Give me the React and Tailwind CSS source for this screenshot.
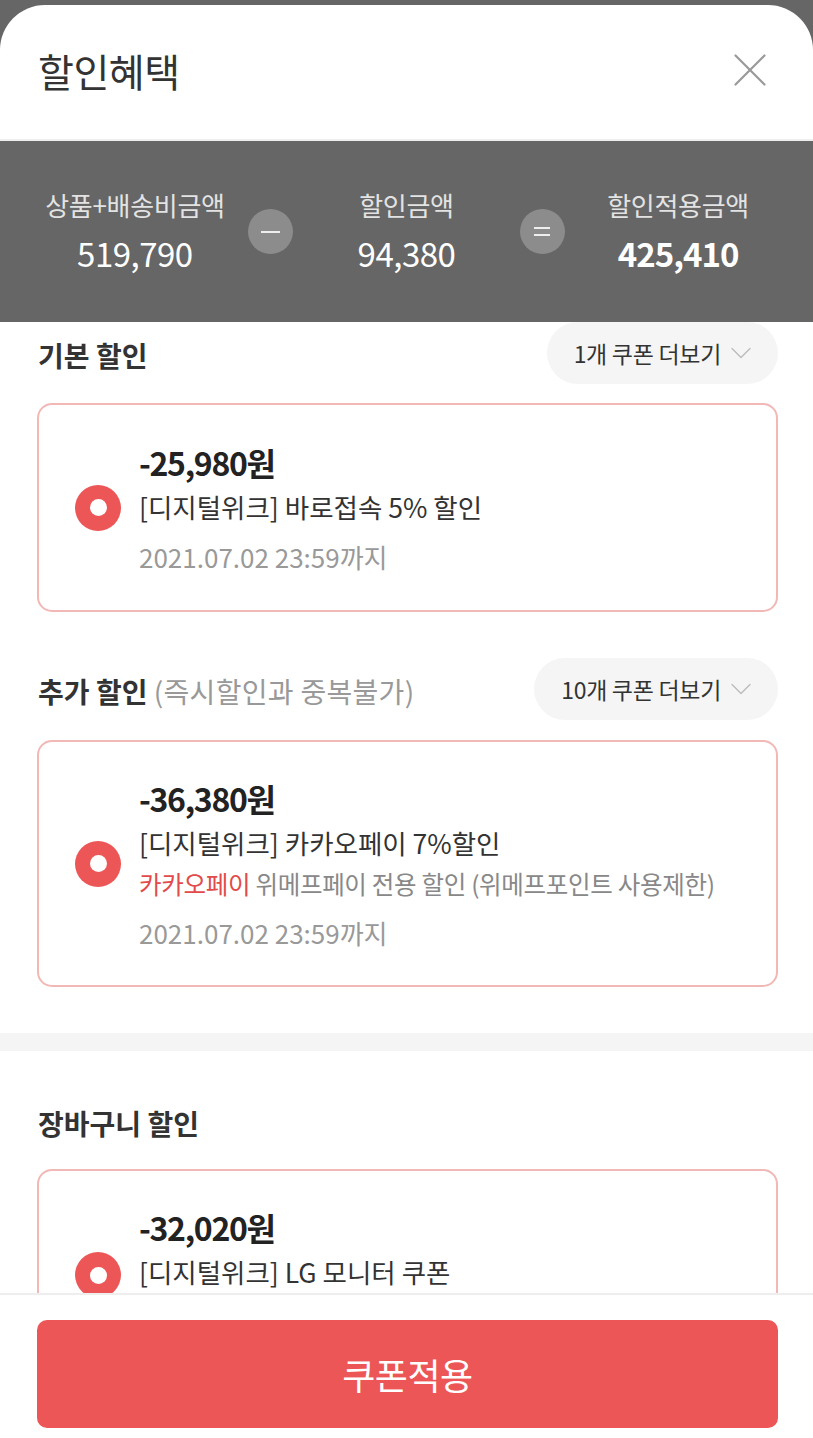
import { X, ChevronDown } from 'lucide-react';

const FONT = { fontFamily: '"Noto Sans CJK KR", "Noto Sans", sans-serif' };

const Radio = () => (
    <span className="w-[46px] h-[46px] rounded-full bg-[#ec5656] flex items-center justify-center shrink-0">
        <span className="w-[17px] h-[17px] rounded-full bg-white" />
    </span>
);

const MoreButton = ({ label }) => (
    <button className="h-[62px] pl-[27px] pr-[19px] rounded-full bg-[#f5f5f5] flex items-center gap-[2px] text-[23px] text-[#333] tracking-[-0.3px]">
        {label}
        <ChevronDown size={36} strokeWidth={0.9} className="text-[#bbb]" />
    </button>
);

const CouponCard = ({ amount, title, extra, date, className }) => (
    <div className={`ml-[37px] mr-[35px] border-2 border-[#f2b8b5] rounded-[15px] flex items-center pl-[36px] pr-6 ${className ?? ''}`}>
        <Radio />
        <div className="ml-[18px] mt-[9px] flex flex-col">
            <p className="text-[32px] font-bold text-[#222] leading-[44px] tracking-[-1.3px]">{amount}</p>
            <p className="text-[26.5px] text-[#333] leading-[46px]">{title}</p>
            {extra && (
                <p className="text-[24.5px] text-[#888] leading-[36px] tracking-[-0.3px]">
                    <span className="text-[#e34a4a]">{extra.brand}</span> {extra.text}
                </p>
            )}
            <p className={`text-[26px] text-[#999] leading-[54px] ${extra ? 'mt-[4px]' : ''}`}>{date}</p>
        </div>
    </div>
);

const Summary = ({ label, value, strong }) => (
    <div className="flex flex-col items-center whitespace-nowrap">
        <span className="text-[26px] text-[#e3e3e3] leading-[34px] tracking-[-0.3px]">{label}</span>
        <span className={strong
            ? 'text-[33px] font-bold text-white leading-[62px] tracking-[-1px]'
            : 'text-[33px] text-white leading-[62px] tracking-[-0.5px]'}>{value}</span>
    </div>
);

export default function App() {
    return (
        <div className="h-[1438px] bg-[#666] pt-[5px] overflow-hidden" style={FONT}>
            <div className="h-full bg-white rounded-t-[45px] flex flex-col overflow-hidden">
                {/* 헤더 */}
                <div className="h-[136px] shrink-0 flex items-center justify-between pl-[38px] pr-[34px] border-b-2 border-[#eee]">
                    <h1 className="text-[39px] text-[#333] tracking-[-0.5px] -mt-[4px]">할인혜택</h1>
                    <X size={58} strokeWidth={0.9} className="text-[#999] -mt-[4px]" />
                </div>

                {/* 금액 요약 */}
                <div className="h-[181px] shrink-0 bg-[#666] grid grid-cols-5 justify-items-center items-start px-[67px] pt-[47px]">
                    <Summary label="상품+배송비금액" value="519,790" />
                    <span className="mt-[21px] w-[45px] h-[45px] rounded-full bg-[#8c8c8c] flex items-center justify-center">
                        <span className="w-[19px] h-[2px] bg-[#eee]" />
                    </span>
                    <Summary label="할인금액" value="94,380" />
                    <span className="mt-[21px] w-[45px] h-[45px] rounded-full bg-[#8c8c8c] flex flex-col gap-[5px] items-center justify-center">
                        <span className="w-[16px] h-[2px] bg-[#eee]" />
                        <span className="w-[16px] h-[2px] bg-[#eee]" />
                    </span>
                    <Summary label="할인적용금액" value="425,410" strong />
                </div>

                {/* 쿠폰 목록 */}
                <div className="flex-1 overflow-hidden">
                    <div className="flex items-center justify-between pl-[38px] pr-[35px]">
                        <h2 className="text-[28px] font-bold text-[#333] mt-[4px]">기본 할인</h2>
                        <MoreButton label="1개 쿠폰 더보기" />
                    </div>
                    <CouponCard
                        className="mt-[19px] h-[209px]"
                        amount="-25,980원"
                        title="[디지털위크] 바로접속 5% 할인"
                        date="2021.07.02 23:59까지"
                    />

                    <div className="mt-[46px] flex items-center justify-between pl-[38px] pr-[35px]">
                        <h2 className="text-[28px] font-bold text-[#333] mt-[4px]">
                            추가 할인 <span className="font-normal text-[#999] tracking-[0.3px]">(즉시할인과 중복불가)</span>
                        </h2>
                        <MoreButton label="10개 쿠폰 더보기" />
                    </div>
                    <CouponCard
                        className="mt-[20px] h-[247px]"
                        amount="-36,380원"
                        title="[디지털위크] 카카오페이 7%할인"
                        extra={{ brand: '카카오페이', text: '위메프페이 전용 할인 (위메프포인트 사용제한)' }}
                        date="2021.07.02 23:59까지"
                    />

                    <div className="mt-[46px] h-[18px] bg-[#f5f5f5]" />

                    <h2 className="mt-[52px] pl-[38px] text-[28px] font-bold text-[#333] leading-[40px]">장바구니 할인</h2>
                    <div className="mt-[26px] ml-[37px] mr-[35px] border-2 border-[#f2b8b5] rounded-[15px] h-[220px] pl-[36px] pt-[34px]">
                        <div className="flex items-start">
                            <span className="mt-[47px]"><Radio /></span>
                            <div className="ml-[18px] flex flex-col">
                                <p className="text-[32px] font-bold text-[#222] leading-[44px] tracking-[-1.3px]">-32,020원</p>
                                <p className="text-[26.5px] text-[#333] leading-[46px]">[디지털위크] LG 모니터 쿠폰</p>
                            </div>
                        </div>
                    </div>
                </div>

                {/* 하단 버튼 */}
                <div className="h-[145px] shrink-0 border-t-2 border-[#eee] bg-white pl-[37px] pr-[35px] pt-[25px]">
                    <button className="w-full h-[108px] rounded-[10px] bg-[#ec5656] text-white text-[36px] tracking-[-0.5px]">
                        쿠폰적용
                    </button>
                </div>
            </div>
        </div>
    );
}
